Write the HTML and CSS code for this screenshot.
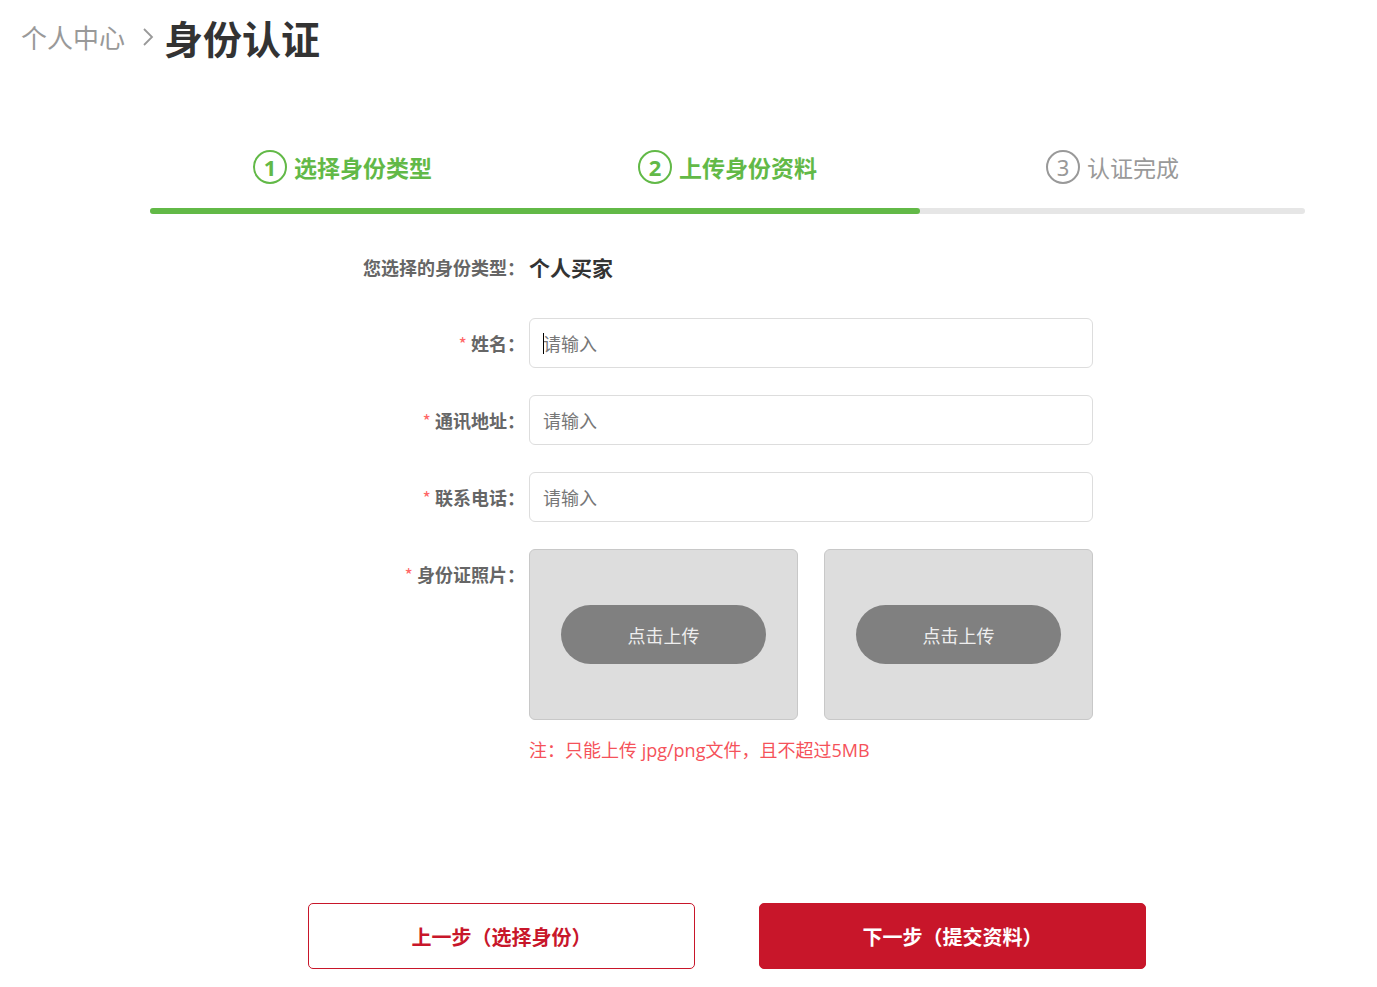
FILE: index.html
```html
<!DOCTYPE html>
<html lang="zh-CN">
<head>
<meta charset="utf-8">
<title>身份认证</title>
<link rel="stylesheet" href="styles.css">
</head>
<body>
<div class="crumb">
  <span class="crumb-parent">个人中心</span>
  <svg class="crumb-sep" width="14" height="22" viewBox="0 0 14 22"><path d="M3 3 L11 11 L3 19" fill="none" stroke="#999" stroke-width="1.8"/></svg>
  <span class="crumb-current">身份认证</span>
</div>

<div class="main">
  <div class="steps">
    <div class="step done"><span class="num">1</span><span class="step-text">选择身份类型</span></div>
    <div class="step done"><span class="num">2</span><span class="step-text">上传身份资料</span></div>
    <div class="step"><span class="num">3</span><span class="step-text">认证完成</span></div>
  </div>
  <div class="bar"><div class="bar-fill" style="width: 770px"></div></div>

  <div class="form">
    <div class="row type-row">
      <div class="label">您选择的身份类型：</div>
      <div class="value">个人买家</div>
    </div>
    <div class="row">
      <div class="label"><span class="req">*</span>姓名：</div>
      <div class="field"><span class="caret"></span><input class="input" type="text" placeholder="请输入"></div>
    </div>
    <div class="row">
      <div class="label"><span class="req">*</span>通讯地址：</div>
      <div class="field"><input class="input" type="text" placeholder="请输入"></div>
    </div>
    <div class="row">
      <div class="label"><span class="req">*</span>联系电话：</div>
      <div class="field"><input class="input" type="text" placeholder="请输入"></div>
    </div>
    <div class="row upload-row">
      <div class="label"><span class="req">*</span>身份证照片：</div>
      <div class="uploads">
        <div class="upload"><span class="pill">点击上传</span></div>
        <div class="upload"><span class="pill">点击上传</span></div>
      </div>
    </div>
    <div class="row note-row">
      <div class="label"></div>
      <div class="note">注：只能上传 jpg/png文件，且不超过5MB</div>
    </div>
  </div>

  <div class="actions">
    <button class="btn btn-prev">上一步（选择身份）</button>
    <button class="btn btn-next">下一步（提交资料）</button>
  </div>
</div>
</body>
</html>
```

FILE: styles.css
```css
* { box-sizing: border-box; }
body {
  margin: 0;
  background: #fff;
  font-family: "Noto Sans CJK SC", "Noto Sans", sans-serif;
  color: #333;
}
.crumb {
  display: flex;
  align-items: center;
  padding: 14px 0 0 21px;
  height: 60px;
}
.crumb-parent {
  font-size: 26px;
  line-height: 46px;
  color: #999;
}
.crumb-sep { margin: 0 9px 0 16px; }
.crumb-current {
  font-size: 39px;
  line-height: 46px;
  font-weight: 700;
  color: #333;
}
.main {
  margin: 90px 0 0 150px;
  width: 1155px;
}
.steps {
  display: grid;
  grid-template-columns: repeat(3, 1fr);
  height: 34px;
}
.step {
  display: flex;
  align-items: center;
  justify-content: center;
  color: #999;
}
.step .num {
  width: 34px;
  height: 34px;
  border: 2px solid #999;
  border-radius: 50%;
  display: flex;
  align-items: center;
  justify-content: center;
  font-size: 22px;
  line-height: 1;
  margin-right: 7px;
  font-family: "Noto Sans", sans-serif;
}
.step-text { font-size: 23px; }
.step.done { color: #62b947; }
.step.done .num { border-color: #62b947; font-weight: 700; }
.step.done .step-text { font-weight: 700; }
.bar {
  margin-top: 24px;
  height: 6px;
  border-radius: 3px;
  background: #e6e6e6;
}
.bar-fill {
  height: 6px;
  border-radius: 3px;
  background: #62b947;
}
.form { margin-top: 40px; }
.row {
  display: grid;
  grid-template-columns: 375px 564px;
  column-gap: 4px;
  align-items: center;
  margin-bottom: 27px;
}
.type-row { margin-bottom: 38px; }
.label {
  text-align: right;
  font-size: 18px;
  font-weight: 700;
  color: #666;
  line-height: 26px;
}
.req {
  color: #f66;
  font-weight: 400;
  margin-right: 4px;
}
.value {
  font-size: 21px;
  font-weight: 700;
  color: #333;
  line-height: 26px;
}
.field { position: relative; }
.caret {
  position: absolute;
  left: 14px;
  top: 15px;
  width: 1px;
  height: 21px;
  background: #000;
}
.input {
  display: block;
  width: 100%;
  height: 50px;
  border: 1px solid #ddd;
  border-radius: 6px;
  padding: 0 13px;
  font-size: 18px;
  font-family: "Noto Sans CJK SC", sans-serif;
  color: #333;
  outline: none;
}
.input::placeholder { color: #777; }
.upload-row { align-items: start; margin-bottom: 0; }
.upload-row .label { line-height: 50px; }
.uploads {
  display: flex;
  gap: 26px;
}
.upload {
  width: 269px;
  height: 171px;
  background: #dddddd;
  border: 1px solid #c8c8c8;
  border-radius: 6px;
  display: flex;
  align-items: center;
  justify-content: center;
}
.pill {
  width: 205px;
  height: 59px;
  border-radius: 30px;
  background: #808080;
  color: #eee;
  font-size: 18px;
  display: flex;
  align-items: center;
  justify-content: center;
}
.note-row { margin-top: 18px; margin-bottom: 0; }
.note {
  font-size: 18px;
  line-height: 24px;
  color: #f5525a;
  font-family: "Open Sans", "Noto Sans CJK SC", sans-serif;
}
.actions {
  display: flex;
  gap: 64px;
  margin-top: 141px;
  padding-left: 158px;
}
.btn {
  width: 387px;
  height: 66px;
  border-radius: 5px;
  font-size: 20px;
  font-weight: 700;
  font-family: "Noto Sans CJK SC", sans-serif;
  cursor: pointer;
}
.btn-prev {
  background: #fff;
  border: 1px solid #c8162a;
  color: #c8162a;
}
.btn-next {
  background: #c8162a;
  border: 1px solid #c8162a;
  color: #fff;
}
```
